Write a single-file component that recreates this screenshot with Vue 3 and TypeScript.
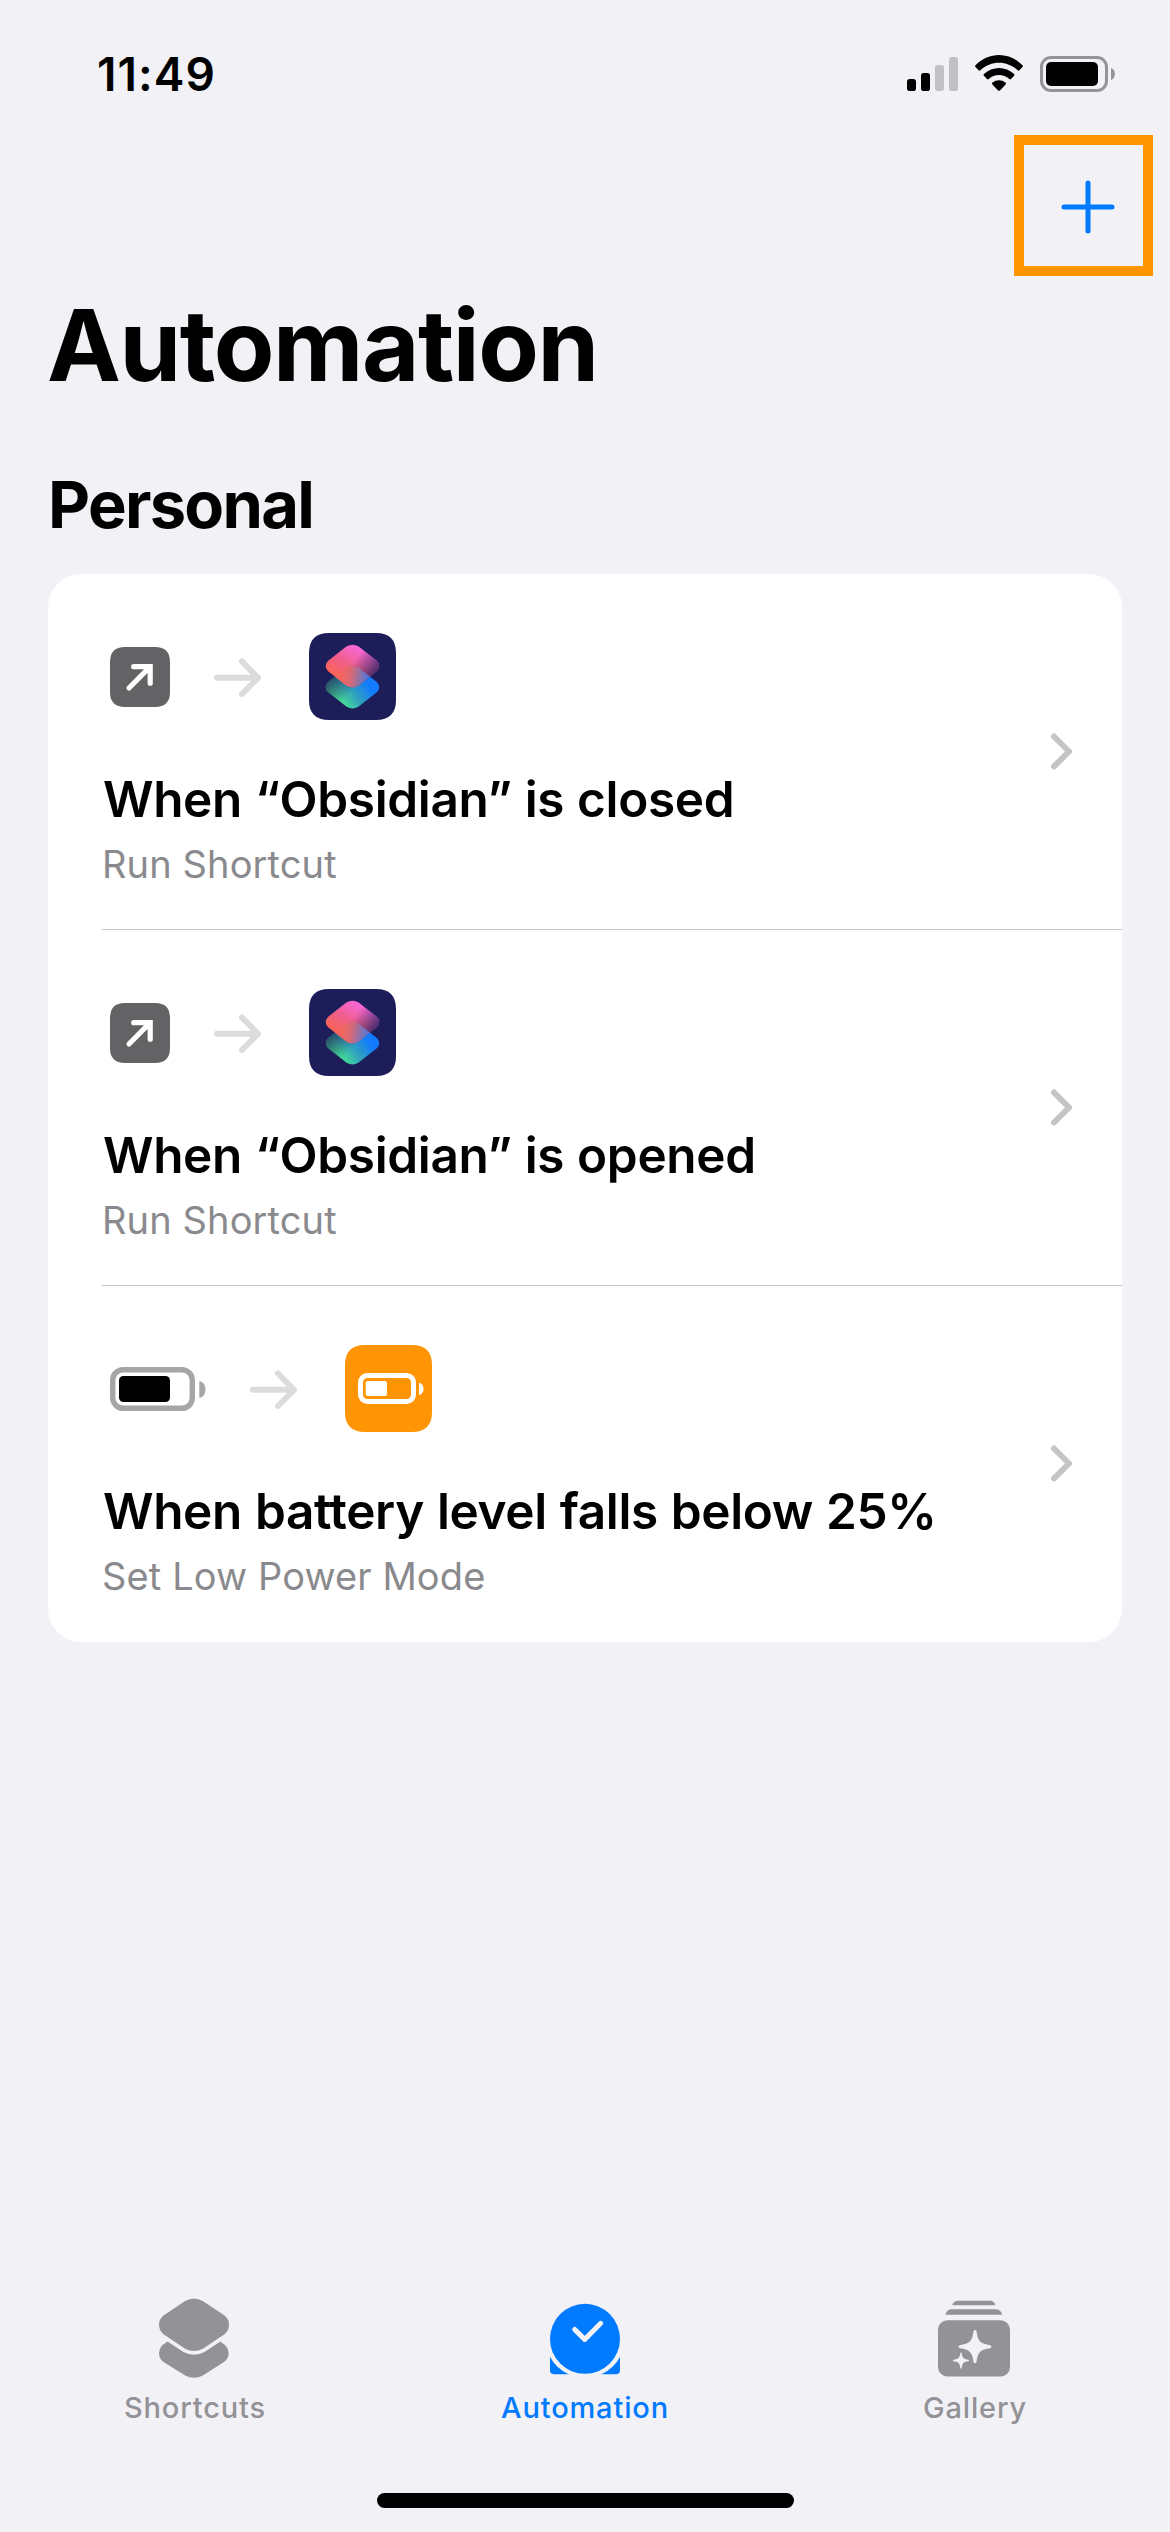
<script setup lang="ts">
interface Automation {
  trigger: 'app' | 'battery'
  action: 'shortcut' | 'power'
  title: string
  subtitle: string
}

interface Tab {
  icon: 'shortcuts' | 'automation' | 'gallery'
  label: string
  active: boolean
}

const automations: Automation[] = [
  { trigger: 'app', action: 'shortcut', title: 'When “Obsidian” is closed', subtitle: 'Run Shortcut' },
  { trigger: 'app', action: 'shortcut', title: 'When “Obsidian” is opened', subtitle: 'Run Shortcut' },
  { trigger: 'battery', action: 'power', title: 'When battery level falls below 25%', subtitle: 'Set Low Power Mode' },
]

const tabs: Tab[] = [
  { icon: 'shortcuts', label: 'Shortcuts', active: false },
  { icon: 'automation', label: 'Automation', active: true },
  { icon: 'gallery', label: 'Gallery', active: false },
]
</script>

<template>
  <div class="screen">
    <header class="status">
      <span class="time">11:49</span>
      <div class="indicators">
        <svg class="signal" width="51" height="36" viewBox="0 0 51 36">
          <rect x="0" y="23" width="9" height="12" rx="2.8" />
          <rect x="14" y="17" width="9" height="18" rx="2.8" />
          <rect x="28" y="9" width="9" height="26" rx="2.8" fill="#c1c0c5" />
          <rect x="42" y="1" width="9" height="34" rx="2.8" fill="#c1c0c5" />
        </svg>
        <svg class="wifi" width="48" height="37" viewBox="0 0 48 37">
          <path d="M0.5 10.2C14 -3.4 34 -3.4 47.5 10.2Q48.4 11.1 47.5 12L44.400 15.300Q43.600 16.100 42.700 15.300C32 5.300 16 5.300 5.300 15.300Q4.400 16.100 3.600 15.300L.5 12Q-.4 11.100 .5 10.200Z" />
          <path d="M8.900 18.900C17.500 10.900 30.500 10.900 39.100 18.900Q40 19.800 39.100 20.700L36 24Q35.200 24.800 34.300 24C28.400 18.700 19.600 18.700 13.700 24Q12.800 24.800 12 24L8.900 20.700Q8 19.800 8.900 18.900Z" />
          <path d="M17.400 27.600C21.200 24.300 26.800 24.300 30.600 27.600Q31.500 28.500 30.600 29.400L24.900 35.400Q24 36.300 23.100 35.400L17.400 29.400Q16.500 28.500 17.400 27.600Z" />
        </svg>
        <svg class="battery" width="75" height="36" viewBox="0 0 75 36">
          <rect x="1.500" y="1.500" width="65" height="33" rx="9.500" fill="none" stroke="#949397" stroke-width="3" />
          <rect x="6" y="6" width="52" height="24" rx="5" />
          <path d="M71 12C76.200 13.700 76.200 22.300 71 24Z" fill="#949397" />
        </svg>
      </div>
    </header>

    <div class="nav">
      <button class="add" aria-label="New automation">
        <svg width="54" height="54" viewBox="0 0 54 54">
          <path d="M3 27H51M27 3V51" stroke="#007aff" stroke-width="5" stroke-linecap="round" />
        </svg>
      </button>
    </div>

    <h1 class="title">Automation</h1>
    <h2 class="section">Personal</h2>

    <ul class="card">
      <li v-for="item in automations" :key="item.title" class="row">
        <div class="info">
          <div class="flow">
            <svg v-if="item.trigger === 'app'" width="60" height="60" viewBox="0 0 60 60">
              <path d="M15 0H45Q60 0 60 15V45Q60 60 45 60H15Q0 60 0 45V15Q0 0 15 0Z" fill="#636365" />
              <path d="M23.700 19.700H40.200V36.200M39.700 20.200L19 41" fill="none" stroke="#fff" stroke-width="5.200" stroke-linecap="round" stroke-linejoin="miter" />
            </svg>
            <svg v-else width="96" height="44" viewBox="0 0 96 44">
              <rect x="2.700" y="2.700" width="79.600" height="38.600" rx="10.500" fill="none" stroke="#a6a6a6" stroke-width="5.400" />
              <rect x="9" y="9" width="51" height="26" rx="4.500" />
              <path d="M89.300 14C97.500 15.500 97.500 29.500 89.300 31Z" fill="#a6a6a6" />
            </svg>

            <svg class="arrow" width="47" height="40" viewBox="0 0 47 40">
              <path d="M3 20.800H43M28 4.500L44 20.800L28 37" fill="none" stroke="#dcdcdd" stroke-width="6" stroke-linecap="round" stroke-linejoin="round" />
            </svg>

            <svg v-if="item.action === 'shortcut'" width="87" height="87" viewBox="0 0 87 87">
              <defs>
                <linearGradient id="pink" gradientUnits="userSpaceOnUse" x1="30" y1="47" x2="50" y2="13">
                  <stop offset="0" stop-color="#fb6450" />
                  <stop offset="0.450" stop-color="#f05f87" />
                  <stop offset="1" stop-color="#f868dd" />
                </linearGradient>
                <linearGradient id="pinkShade" gradientUnits="userSpaceOnUse" x1="46" y1="27" x2="66" y2="41">
                  <stop offset="0" stop-color="#1c1d59" stop-opacity="0" />
                  <stop offset="1" stop-color="#1c1d59" stop-opacity="0.780" />
                </linearGradient>
                <linearGradient id="blue" gradientUnits="userSpaceOnUse" x1="33" y1="70" x2="62" y2="49">
                  <stop offset="0" stop-color="#45dc96" />
                  <stop offset="0.450" stop-color="#2f9fc0" />
                  <stop offset="0.900" stop-color="#127bff" />
                </linearGradient>
                <linearGradient id="blueShade" gradientUnits="userSpaceOnUse" x1="41" y1="61" x2="23" y2="45">
                  <stop offset="0" stop-color="#1c1d59" stop-opacity="0" />
                  <stop offset="1" stop-color="#1c1d59" stop-opacity="0.720" />
                </linearGradient>
                <linearGradient id="overlap" gradientUnits="userSpaceOnUse" x1="33" y1="42" x2="60" y2="46">
                  <stop offset="0" stop-color="#f4655f" />
                  <stop offset="0.350" stop-color="#d46a78" />
                  <stop offset="0.750" stop-color="#7b74b8" />
                  <stop offset="1" stop-color="#4c76d8" />
                </linearGradient>
                <clipPath id="upper">
                  <path d="M37.300 13.600Q43.500 9.900 49.700 13.600L67.500 27.600Q73.200 33 67.500 38.400L49.700 52.400Q43.500 56.200 37.300 52.400L19.500 38.400Q13.800 33 19.500 27.600Z" />
                </clipPath>
              </defs>
              <path d="M20 0H67Q87 0 87 20V67Q87 87 67 87H20Q0 87 0 67V20Q0 0 20 0Z" fill="#1c1d59" />
              <path d="M37.300 34.700Q43.500 31 49.700 34.700L67.500 48.700Q73.200 54.100 67.500 59.500L49.700 73.500Q43.500 77.300 37.300 73.500L19.500 59.500Q13.800 54.100 19.500 48.700Z" fill="url(#blue)" />
              <path d="M37.300 34.700Q43.500 31 49.700 34.700L67.500 48.700Q73.200 54.100 67.500 59.500L49.700 73.500Q43.500 77.300 37.300 73.500L19.500 59.500Q13.800 54.100 19.500 48.700Z" fill="url(#blueShade)" />
              <path d="M37.300 13.600Q43.500 9.900 49.700 13.600L67.500 27.600Q73.200 33 67.500 38.400L49.700 52.400Q43.500 56.200 37.300 52.400L19.500 38.400Q13.800 33 19.500 27.600Z" fill="url(#pink)" />
              <path d="M37.300 13.600Q43.500 9.900 49.700 13.600L67.500 27.600Q73.200 33 67.500 38.400L49.700 52.400Q43.500 56.200 37.300 52.400L19.500 38.400Q13.800 33 19.500 27.600Z" fill="url(#pinkShade)" />
              <path clip-path="url(#upper)" d="M37.300 34.700Q43.500 31 49.700 34.700L67.500 48.700Q73.200 54.100 67.500 59.500L49.700 73.500Q43.500 77.300 37.300 73.500L19.500 59.500Q13.800 54.100 19.500 48.700Z" fill="url(#overlap)" />
            </svg>
            <svg v-else width="87" height="87" viewBox="0 0 87 87">
              <path d="M20 0H67Q87 0 87 20V67Q87 87 67 87H20Q0 87 0 67V20Q0 0 20 0Z" fill="#ff9505" />
              <rect x="15.500" y="30.500" width="53" height="26" rx="7" fill="none" stroke="#fff" stroke-width="5" />
              <rect x="20.700" y="36" width="21.300" height="15" rx="2" fill="#fff" />
              <path d="M74 37.700C80 39 80 48.700 74 50Z" fill="#fff" />
            </svg>
          </div>
          <div class="name">{{ item.title }}</div>
          <div class="detail">{{ item.subtitle }}</div>
        </div>
        <svg class="chevron" width="21" height="37" viewBox="0 0 21 37">
          <path d="M3 3.500L18 18.500L3 33.500" fill="none" stroke="#c4c4c6" stroke-width="6" stroke-linecap="round" stroke-linejoin="round" />
        </svg>
      </li>
    </ul>

    <nav class="tabs">
      <div v-for="tab in tabs" :key="tab.label" class="tab" :class="{ active: tab.active }">
        <svg v-if="tab.icon === 'shortcuts'" class="side" width="72" height="84" viewBox="0 -1.500 72 84" fill="currentColor">
          <path d="M27.200 5.500Q36 .5 44.800 5.500L66.500 20Q71 23.500 71 29.300T66.500 38.700L44.800 53.200Q36 58 27.200 53.200L5.500 38.700Q1 35 1 29.300T5.500 20Z" />
          <path d="M9.500 46L25.500 56.500Q36 62 46.500 56.500L62.300 46L67.500 50Q70.700 53.500 70.700 57.400Q70.700 63 66 66.500L44.800 80Q36 84.500 27.200 80L5.500 66.500Q1 63 1 57.400Q1 53.500 4 50Z" />
        </svg>
        <svg v-else-if="tab.icon === 'automation'" width="70" height="84" viewBox="0 0 70 84" fill="currentColor">
          <path d="M0 60V76Q0 80.300 4.300 80.300H65.700Q70 80.300 70 76V60Z" />
          <circle cx="35" cy="44.800" r="39.300" fill="#f2f1f6" />
          <circle cx="35" cy="44.800" r="35" />
          <path d="M24.700 35.500L34.700 45.400L50.700 29.300" fill="none" stroke="#f2f1f6" stroke-width="5" stroke-linecap="round" stroke-linejoin="round" />
        </svg>
        <svg v-else class="side" width="72" height="84" viewBox="0 0 72 84" fill="currentColor">
          <path d="M14.300 11.300Q15.500 6.700 20 6.700H52Q56.300 6.700 57.500 11.300Z" />
          <path d="M7.300 20.700Q9 15.300 14 15.300H57.500Q62.500 15.300 64.300 20.700Z" />
          <rect x="0" y="26.300" width="72" height="56.300" rx="9.500" />
          <path fill="#f2f1f6" d="M35.500 37.300Q37 34.700 38.500 37.300C39.600 47 42.500 50 52.200 51.200Q54.800 52.700 52.200 54.200C42.500 55.400 39.600 58.300 38.500 68Q37 70.500 35.500 68C34.400 58.300 31.500 55.400 21.800 54.200Q19.200 52.700 21.800 51.200C31.500 50 34.400 47 35.500 37.300Z" />
          <path fill="#f2f1f6" d="M22.300 59Q23 57.800 23.700 59C24.200 63.800 25.700 65.200 30.500 65.700Q31.800 66.500 30.500 67.300C25.700 67.800 24.200 69.200 23.700 74Q23 75.200 22.300 74C21.800 69.200 20.300 67.800 15.500 67.300Q14.200 66.500 15.500 65.700C20.300 65.200 21.800 63.800 22.300 59Z" />
        </svg>
        <span class="label">{{ tab.label }}</span>
      </div>
    </nav>
    <div class="home"></div>
  </div>
</template>

<style>
body {
  margin: 0;
  background: #f2f1f6;
}
</style>

<style scoped>
.screen {
  display: flex;
  flex-direction: column;
  width: 1170px;
  height: 2532px;
  background: #f2f1f6;
  color: #000;
  font-family: Inter, "Liberation Sans", sans-serif;
  white-space: nowrap;
}

.status {
  display: flex;
  justify-content: space-between;
  height: 92px;
  padding: 43px 55px 0 97px;
  box-sizing: border-box;
  margin-bottom: 43px;
}

.time {
  height: 63px;
  font-size: 46px;
  font-weight: 600;
  line-height: 63px;
  letter-spacing: 1.1px;
}

.indicators {
  display: flex;
  align-items: flex-start;
  padding-top: 13px;
}

.wifi {
  margin: -1px 17px 0 17px;
}

.nav {
  display: flex;
  justify-content: flex-end;
  padding-right: 17px;
}

.add {
  display: flex;
  align-items: flex-start;
  width: 139px;
  height: 141px;
  box-sizing: border-box;
  padding: 35px 0 0 37px;
  border: 10px solid #ff9500;
  background: none;
}

.title {
  margin: 9px 0 0 47px;
  font-size: 99px;
  font-weight: 700;
  line-height: 120px;
  letter-spacing: -1.4px;
}

.section {
  margin: 60px 0 0 48px;
  font-size: 65px;
  font-weight: 700;
  line-height: 80px;
  letter-spacing: -1.7px;
}

.card {
  margin: 29px 48px 0;
  padding: 0;
  list-style: none;
  border-radius: 33px;
  background: #fff;
}

.row {
  display: flex;
  align-items: center;
  height: 356px;
  margin-left: 54px;
  padding-right: 50px;
  box-sizing: border-box;
  border-bottom: 1px solid #c6c6c8;
}

.row:last-child {
  border-bottom-color: transparent;
}

.info {
  flex: 1;
  height: 355px;
  padding-top: 59px;
  box-sizing: border-box;
}

.flow {
  display: flex;
  align-items: center;
  height: 87px;
  padding-left: 8px;
}

.arrow {
  margin: 0 48px 0 44px;
}

.name {
  margin: 44px 0 0 1px;
  font-size: 49.5px;
  font-weight: 600;
  line-height: 70px;
  letter-spacing: -0.35px;
  word-spacing: 0.8px;
}

.detail {
  margin-top: 5px;
  color: #8a8a8e;
  font-size: 38px;
  line-height: 50px;
  letter-spacing: 0.12px;
}

.tabs {
  display: flex;
  margin-top: auto;
}

.tab {
  display: flex;
  flex: 1;
  flex-direction: column;
  align-items: center;
  color: #929297;
}

.tab.active {
  color: #007aff;
}

.side {
  margin-right: 2.6px;
}

.label {
  margin-top: 10px;
  font-size: 29px;
  font-weight: 500;
  line-height: 40px;
  letter-spacing: 0.85px;
}

.home {
  width: 417px;
  height: 15px;
  margin: 65px auto 24px;
  border-radius: 8px;
  background: #000;
}
</style>
